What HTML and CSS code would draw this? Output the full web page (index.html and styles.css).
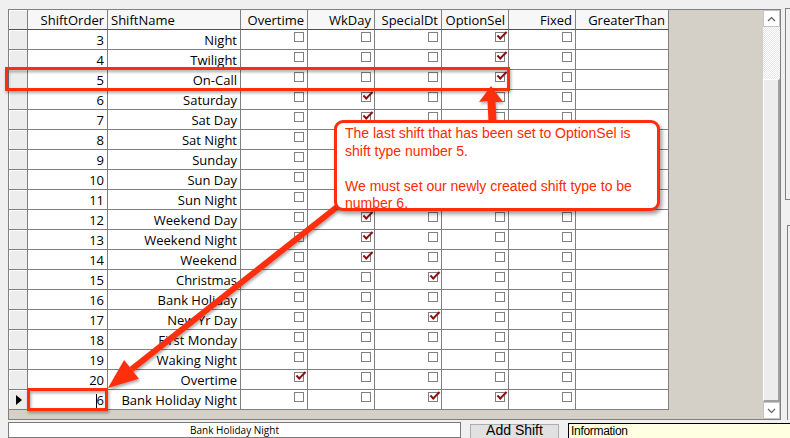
FILE: index.html
```html
<!DOCTYPE html>
<html>
<head>
<meta charset="utf-8">
<link rel="stylesheet" href="styles.css">
</head>
<body>
<div class="app">
  <div class="top">
    <div class="frame">
      <div class="grid-area">
        <div class="table">
          <div class="row head">
            <div class="cell sel"></div><div class="cell">ShiftOrder</div><div class="cell left">ShiftName</div><div class="cell">Overtime</div><div class="cell">WkDay</div><div class="cell">SpecialDt</div><div class="cell">OptionSel</div><div class="cell">Fixed</div><div class="cell">GreaterThan</div>
          </div>
          <div class="row"><div class="cell sel"></div><div class="cell">3</div><div class="cell">Night</div><div class="cell"><span class="cb"></span></div><div class="cell"><span class="cb"></span></div><div class="cell"><span class="cb"></span></div><div class="cell"><span class="cb on"></span></div><div class="cell"><span class="cb"></span></div><div class="cell"></div></div>
          <div class="row"><div class="cell sel"></div><div class="cell">4</div><div class="cell">Twilight</div><div class="cell"><span class="cb"></span></div><div class="cell"><span class="cb"></span></div><div class="cell"><span class="cb"></span></div><div class="cell"><span class="cb on"></span></div><div class="cell"><span class="cb"></span></div><div class="cell"></div></div>
          <div class="row"><div class="cell sel"></div><div class="cell">5</div><div class="cell">On-Call</div><div class="cell"><span class="cb"></span></div><div class="cell"><span class="cb"></span></div><div class="cell"><span class="cb"></span></div><div class="cell"><span class="cb on"></span></div><div class="cell"><span class="cb"></span></div><div class="cell"></div></div>
          <div class="row"><div class="cell sel"></div><div class="cell">6</div><div class="cell">Saturday</div><div class="cell"><span class="cb"></span></div><div class="cell"><span class="cb on"></span></div><div class="cell"><span class="cb"></span></div><div class="cell"><span class="cb"></span></div><div class="cell"><span class="cb"></span></div><div class="cell"></div></div>
          <div class="row"><div class="cell sel"></div><div class="cell">7</div><div class="cell">Sat Day</div><div class="cell"><span class="cb"></span></div><div class="cell"><span class="cb on"></span></div><div class="cell"><span class="cb"></span></div><div class="cell"><span class="cb"></span></div><div class="cell"><span class="cb"></span></div><div class="cell"></div></div>
          <div class="row"><div class="cell sel"></div><div class="cell">8</div><div class="cell">Sat Night</div><div class="cell"><span class="cb"></span></div><div class="cell"><span class="cb on"></span></div><div class="cell"><span class="cb"></span></div><div class="cell"><span class="cb"></span></div><div class="cell"><span class="cb"></span></div><div class="cell"></div></div>
          <div class="row"><div class="cell sel"></div><div class="cell">9</div><div class="cell">Sunday</div><div class="cell"><span class="cb"></span></div><div class="cell"><span class="cb on"></span></div><div class="cell"><span class="cb"></span></div><div class="cell"><span class="cb"></span></div><div class="cell"><span class="cb"></span></div><div class="cell"></div></div>
          <div class="row"><div class="cell sel"></div><div class="cell">10</div><div class="cell">Sun Day</div><div class="cell"><span class="cb"></span></div><div class="cell"><span class="cb on"></span></div><div class="cell"><span class="cb"></span></div><div class="cell"><span class="cb"></span></div><div class="cell"><span class="cb"></span></div><div class="cell"></div></div>
          <div class="row"><div class="cell sel"></div><div class="cell">11</div><div class="cell">Sun Night</div><div class="cell"><span class="cb"></span></div><div class="cell"><span class="cb on"></span></div><div class="cell"><span class="cb"></span></div><div class="cell"><span class="cb"></span></div><div class="cell"><span class="cb"></span></div><div class="cell"></div></div>
          <div class="row"><div class="cell sel"></div><div class="cell">12</div><div class="cell">Weekend Day</div><div class="cell"><span class="cb"></span></div><div class="cell"><span class="cb on"></span></div><div class="cell"><span class="cb"></span></div><div class="cell"><span class="cb"></span></div><div class="cell"><span class="cb"></span></div><div class="cell"></div></div>
          <div class="row"><div class="cell sel"></div><div class="cell">13</div><div class="cell">Weekend Night</div><div class="cell"><span class="cb"></span></div><div class="cell"><span class="cb on"></span></div><div class="cell"><span class="cb"></span></div><div class="cell"><span class="cb"></span></div><div class="cell"><span class="cb"></span></div><div class="cell"></div></div>
          <div class="row"><div class="cell sel"></div><div class="cell">14</div><div class="cell">Weekend</div><div class="cell"><span class="cb"></span></div><div class="cell"><span class="cb on"></span></div><div class="cell"><span class="cb"></span></div><div class="cell"><span class="cb"></span></div><div class="cell"><span class="cb"></span></div><div class="cell"></div></div>
          <div class="row"><div class="cell sel"></div><div class="cell">15</div><div class="cell">Christmas</div><div class="cell"><span class="cb"></span></div><div class="cell"><span class="cb"></span></div><div class="cell"><span class="cb on"></span></div><div class="cell"><span class="cb"></span></div><div class="cell"><span class="cb"></span></div><div class="cell"></div></div>
          <div class="row"><div class="cell sel"></div><div class="cell">16</div><div class="cell">Bank Holiday</div><div class="cell"><span class="cb"></span></div><div class="cell"><span class="cb"></span></div><div class="cell"><span class="cb"></span></div><div class="cell"><span class="cb"></span></div><div class="cell"><span class="cb"></span></div><div class="cell"></div></div>
          <div class="row"><div class="cell sel"></div><div class="cell">17</div><div class="cell">New Yr Day</div><div class="cell"><span class="cb"></span></div><div class="cell"><span class="cb"></span></div><div class="cell"><span class="cb on"></span></div><div class="cell"><span class="cb"></span></div><div class="cell"><span class="cb"></span></div><div class="cell"></div></div>
          <div class="row"><div class="cell sel"></div><div class="cell">18</div><div class="cell">First Monday</div><div class="cell"><span class="cb"></span></div><div class="cell"><span class="cb"></span></div><div class="cell"><span class="cb"></span></div><div class="cell"><span class="cb"></span></div><div class="cell"><span class="cb"></span></div><div class="cell"></div></div>
          <div class="row"><div class="cell sel"></div><div class="cell">19</div><div class="cell">Waking Night</div><div class="cell"><span class="cb"></span></div><div class="cell"><span class="cb"></span></div><div class="cell"><span class="cb"></span></div><div class="cell"><span class="cb"></span></div><div class="cell"><span class="cb"></span></div><div class="cell"></div></div>
          <div class="row"><div class="cell sel"></div><div class="cell">20</div><div class="cell">Overtime</div><div class="cell"><span class="cb on"></span></div><div class="cell"><span class="cb"></span></div><div class="cell"><span class="cb"></span></div><div class="cell"><span class="cb"></span></div><div class="cell"><span class="cb"></span></div><div class="cell"></div></div>
          <div class="row"><div class="cell sel cur"><span class="ptr"></span></div><div class="cell"><span class="caret"></span>6</div><div class="cell">Bank Holiday Night</div><div class="cell"><span class="cb"></span></div><div class="cell"><span class="cb"></span></div><div class="cell"><span class="cb on"></span></div><div class="cell"><span class="cb on"></span></div><div class="cell"><span class="cb"></span></div><div class="cell"></div></div>
        </div>
      </div>
      <div class="vscroll">
        <div class="sbtn"><svg width="9" height="6" viewBox="0 0 9 6"><path d="M1 5 L4.5 1.5 L8 5" fill="none" stroke="#606060" stroke-width="1.2"/></svg></div>
        <div class="strack"></div>
        <div class="thumb"></div>
        <div class="sbtn"><svg width="9" height="6" viewBox="0 0 9 6"><path d="M1 1 L4.5 4.5 L8 1" fill="none" stroke="#606060" stroke-width="1.2"/></svg></div>
      </div>
    </div>
    <div class="side">
      <div class="sbox1"></div>
      <div class="sbox2"></div>
    </div>
  </div>
  <div class="bottom">
    <div class="namebox">Bank Holiday Night</div>
    <div class="btn">Add Shift</div>
    <div class="info">Information</div>
  </div>
</div>

<svg class="overlay" width="790" height="438" viewBox="0 0 790 438">
  <defs>
    <filter id="sh" x="-10%" y="-10%" width="130%" height="140%">
      <feDropShadow dx="1" dy="2" stdDeviation="1.5" flood-color="#000" flood-opacity="0.35"/>
    </filter>
  </defs>
  <g filter="url(#sh)" fill="none" stroke="#ff2d0f" stroke-width="3">
    <rect x="6.5" y="68.5" width="502" height="21"/>
    <rect x="28.5" y="389.5" width="78" height="20"/>
  </g>
  <g filter="url(#sh)" fill="#ff2d0f">
    <polygon points="491,86 503,102 495.5,101 496.5,122 488.5,122 487.5,101 479,102"/>
    <line x1="342" y1="203" x2="131.5" y2="369.4" stroke="#ff2d0f" stroke-width="6"/>
    <polygon points="108,388 138.9,378.8 124.1,360"/>
  </g>
</svg>
<div class="callout">
  <p>The last shift that has been set to OptionSel is<br>shift type number 5.</p>
  <p>We must set our newly created shift type to be<br>number 6.</p>
</div>
</body>
</html>
```
FILE: styles.css
```css
* { box-sizing: border-box; }
html, body { margin: 0; padding: 0; }
body {
  width: 790px;
  height: 438px;
  overflow: hidden;
  position: relative;
  background: #f0f0f0;
  font-family: "Open Sans", "DejaVu Sans", sans-serif;
  font-size: 13px;
  color: #000;
}
.app {
  display: flex;
  flex-direction: column;
  padding: 9px 0 0 8px;
  height: 438px;
}
.top {
  display: flex;
  gap: 4px;
  height: 411px;
}
.frame {
  width: 773px;
  height: 411px;
  flex: none;
  display: flex;
  border: 1px solid #808080;
  background: #d4d0c8;
}
.grid-area { width: 754px; }
.table { width: 660px; }
.row {
  display: grid;
  grid-template-columns: 19px 80px 133px repeat(5, 67px) 93px;
  height: 20px;
}
.cell {
  height: 20px;
  background: #fff;
  border-right: 1px solid #808080;
  border-bottom: 1px solid #808080;
  padding: 1px 3px 0;
  line-height: 19px;
  text-align: right;
  white-space: nowrap;
  overflow: hidden;
}
.cell.left { text-align: left; }
.head .cell {
  background: #f7f7f7;
  border-bottom-color: #505050;
}
.cell.sel {
  background: #ededed;
  padding: 0;
  box-shadow: inset 1px 1px 0 #fff;
}
.cell.cur {
  display: flex;
  align-items: center;
  justify-content: center;
}
.ptr {
  width: 0;
  height: 0;
  border-left: 6px solid #000;
  border-top: 5px solid transparent;
  border-bottom: 5px solid transparent;
  margin-left: 1px;
}
.caret {
  display: inline-block;
  width: 1px;
  height: 15px;
  background: #000;
  vertical-align: middle;
}
.cb {
  display: inline-block;
  position: relative;
  width: 10px;
  height: 10px;
  margin-top: 1px;
  vertical-align: top;
  border: 1px solid #808080;
  background: #fff;
}
.cb.on::after {
  content: "";
  position: absolute;
  left: 1px;
  top: -1px;
  width: 8px;
  height: 3px;
  border-left: 2px solid #8b1010;
  border-bottom: 2px solid #8b1010;
  transform: rotate(-45deg);
}
.vscroll {
  width: 17px;
  display: flex;
  flex-direction: column;
  background: repeating-conic-gradient(#ffffff 0 25%, #e6e6e6 0 50%) 0 0 / 2px 2px;
}
.sbtn {
  height: 17px;
  flex: none;
  background: #fff;
  border: 1px solid #c4c4c4;
  display: flex;
  align-items: center;
  justify-content: center;
}
.strack { height: 52px; flex: none; }
.thumb {
  flex: 1;
  background: #ececec;
  border-top: 1px solid #fff;
  border-left: 1px solid #fff;
  border-right: 2px solid #a0a0a0;
  border-bottom: 2px solid #a0a0a0;
}
.side {
  flex: 1;
  display: flex;
  flex-direction: column;
  gap: 25px;
}
.sbox1 {
  height: 192px;
  margin-top: -1px;
  border-left: 1px solid #808080;
  border-top: 1px solid #808080;
  border-bottom: 1px solid #808080;
}
.sbox2 {
  flex: 1;
  margin-left: 2px;
  border-left: 1px solid #808080;
  border-top: 1px solid #808080;
  background: #f0f0f0;
}
.bottom {
  display: flex;
  align-items: flex-start;
  margin-top: 2px;
}
.namebox {
  width: 453px;
  height: 16px;
  flex: none;
  background: #fff;
  border: 1px solid #7a7a7a;
  font-size: 10px;
  line-height: 14px;
  text-align: center;
}
.btn {
  width: 89px;
  height: 14px;
  flex: none;
  margin: 2px 0 0 9px;
  background: #e1e1e1;
  border: 1px solid #adadad;
  border-bottom: none;
  font-family: "Liberation Sans", Arial, sans-serif;
  font-size: 14px;
  line-height: 10px;
  text-align: center;
}
.info {
  width: 230px;
  height: 15px;
  flex: none;
  margin: 1px 0 0 9px;
  background: #ffffe1;
  border: 1px solid #000;
  border-bottom: none;
  font-family: "Liberation Sans", Arial, sans-serif;
  font-size: 12px;
  letter-spacing: -0.3px;
  line-height: 14px;
  padding-left: 2px;
}
.overlay {
  position: absolute;
  left: 0;
  top: 0;
  pointer-events: none;
}
.callout {
  position: absolute;
  left: 334px;
  top: 120px;
  width: 326px;
  height: 91px;
  padding: 2px 8px;
  background: #fff;
  border: 3.5px solid #ff2d0f;
  border-radius: 9px;
  box-shadow: 2px 3px 4px rgba(0, 0, 0, 0.4);
  color: #ff2a00;
  font-family: "Liberation Sans", Arial, sans-serif;
  font-size: 14px;
  line-height: 17.5px;
}
.callout p { margin: 0 0 17.5px 0; }
.callout p:last-child { margin-bottom: 0; }
```
